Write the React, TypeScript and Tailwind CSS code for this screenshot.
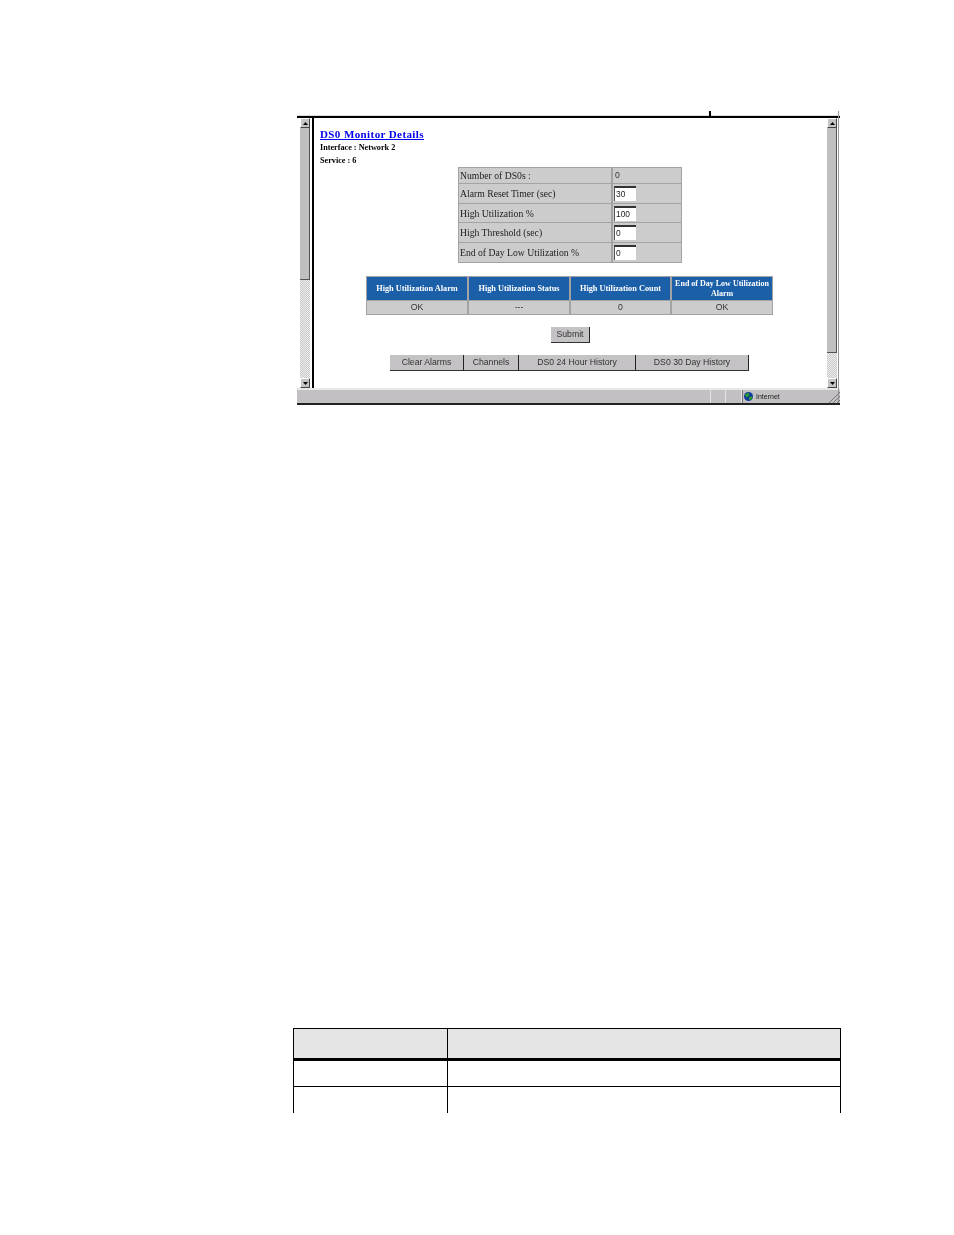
const serif = "font-['Liberation_Serif',serif]";
const sans = "font-['Liberation_Sans',sans-serif]";

function Arrow({ down }: { down?: boolean }) {
  return (
    <div className="flex h-[10px] w-full items-center justify-center border border-t-white border-l-white border-r-[#444] border-b-[#444] bg-[#c4c4c4]">
      <svg width="5" height="3" viewBox="0 0 5 3">
        <path d={down ? "M0 0H5L2.5 3Z" : "M0 3H5L2.5 0Z"} fill="#000" />
      </svg>
    </div>
  );
}

function Scrollbar({ thumb }: { thumb: number }) {
  return (
    <div className="flex h-full w-[10px] flex-col">
      <Arrow />
      <div
        className="w-full shrink-0 border-r border-b border-r-[#555] border-b-[#555] bg-[#c0c0c0]"
        style={{ height: thumb }}
      />
      <div className="flex-1 bg-[repeating-conic-gradient(#c8c8c8_0%_25%,#eeeeee_0%_50%)] bg-[length:2px_2px]" />
      <Arrow down />
    </div>
  );
}

function FormRow({ label, value, input, h }: { label: string; value: string; input?: boolean; h: string }) {
  return (
    <div className={`flex ${h} border-b border-[#a3a3a3] last:border-b-0`}>
      <div className={`flex w-[154px] items-center border-r-2 border-[#a3a3a3] pt-[2px] pl-[1px] ${serif} text-[9.7px] text-[#222]`}>
        {label}
      </div>
      <div className="flex flex-1 items-center pl-[1px]">
        {input ? (
          <div className={`flex h-[15px] w-[22px] items-center border-t-2 border-l border-t-[#333] border-l-[#555] bg-white pl-[1px] ${sans} text-[8.4px] text-[#222]`}>
            {value}
          </div>
        ) : (
          <span className={`${sans} pl-[1px] text-[8.7px] text-[#333]`}>{value}</span>
        )}
      </div>
    </div>
  );
}

function Btn({ children, w }: { children: string; w: string }) {
  return (
    <div className={`flex h-[16px] ${w} items-center justify-center border-r border-b border-r-[#222] border-b-[#333] bg-[#c4c2c4] ${sans} text-[8.7px] text-[#333]`}>
      {children}
    </div>
  );
}

const heads = ["High Utilization Alarm", "High Utilization Status", "High Utilization Count", "End of Day Low Utilization Alarm"];
const vals = ["OK", "---", "0", "OK"];

export default function App() {
  return (
    <div className="h-[1235px] w-[954px] overflow-hidden bg-white pt-[111px]">
      {/* browser window */}
      <div className="relative ml-[297px] flex h-[294px] w-[543px] flex-col blur-[0.3px]">
        <div className="absolute top-0 left-[412px] h-[5px] w-[1.5px] bg-black" />
        <div className="absolute top-0 right-[1px] h-[292px] w-[1px] bg-[#999]" />
        <div className="mt-[4px] h-[1px] w-full shrink-0 bg-[#dddddd]" />
        <div className="h-[2px] w-full shrink-0 bg-black" />
        <div className="flex h-[270px] shrink-0">
          <div className="ml-[3px] h-full">
            <Scrollbar thumb={152} />
          </div>
          <div className="ml-[2px] h-full w-[2px] bg-black" />
          {/* page */}
          <div className="flex w-[513px] flex-col pl-[6px]">
            <div className={`mt-[9px] h-[14px] text-[11px] leading-[14px] font-bold tracking-[0.4px] text-[#0000ee] underline ${serif}`}>
              DS0 Monitor Details
            </div>
            <div className={`text-[8.2px] leading-[13px] font-bold text-black ${serif}`}>Interface : Network 2</div>
            <div className={`text-[8.2px] leading-[13px] font-bold text-black ${serif}`}>Service : 6</div>
            {/* settings table */}
            <div className="ml-[138px] w-[224px] border border-[#a3a3a3] bg-[#cccccc]">
              <FormRow h="h-[16px]" label="Number of DS0s :" value="0" />
              <FormRow h="h-[20px]" label="Alarm Reset Timer (sec)" value="30" input />
              <FormRow h="h-[19px]" label="High Utilization %" value="100" input />
              <FormRow h="h-[20px]" label="High Threshold (sec)" value="0" input />
              <FormRow h="h-[19px]" label="End of Day Low Utilization %" value="0" input />
            </div>
            {/* status table */}
            <div className="mt-[13px] ml-[46px] w-[407px] border border-[#a3a3a3]">
              <div className="grid h-[23px] grid-cols-[102px_102px_101px_1fr] bg-[#1a5fa8]">
                {heads.map((h, i) => (
                  <div
                    key={h}
                    className={`flex items-center justify-center border-r-2 border-[#a3a3a3] text-center ${i === 3 ? "text-[8px]" : "text-[8.3px]"} leading-[10px] font-bold text-white last:border-r-0 ${serif}`}
                  >
                    {h}
                  </div>
                ))}
              </div>
              <div className="grid h-[14px] grid-cols-[102px_102px_101px_1fr] border-t border-[#a3a3a3] bg-[#cccccc]">
                {vals.map((v, i) => (
                  <div
                    key={i}
                    className={`flex items-center justify-center border-r-2 border-[#a3a3a3] text-[8.7px] text-[#333] last:border-r-0 ${sans}`}
                  >
                    {v}
                  </div>
                ))}
              </div>
            </div>
            {/* submit */}
            <div className="mt-[12px] ml-[231px] flex">
              <Btn w="w-[39px]">Submit</Btn>
            </div>
            {/* action buttons */}
            <div className="mt-[12px] ml-[70px] flex">
              <Btn w="w-[74px]">Clear Alarms</Btn>
              <Btn w="w-[55px]">Channels</Btn>
              <Btn w="w-[117px]">DS0 24 Hour History</Btn>
              <Btn w="w-[113px]">DS0 30 Day History</Btn>
            </div>
          </div>
          <div className="h-full">
            <Scrollbar thumb={225} />
          </div>
        </div>
        {/* status bar */}
        <div className="flex h-[17px] shrink-0 items-stretch border-t-2 border-b-2 border-t-[#e8e8e8] border-b-[#222] bg-[#c2c0c2]">
          <div className="flex-1" />
          <div className="w-[16px] border-x border-[#e4e4e4]" />
          <div className="w-[16px] border-r border-[#e4e4e4]" />
          <div className={`relative flex w-[98px] items-center gap-[3px] border-l border-[#777] pl-[1px] ${sans} text-[7px] text-[#222]`}>
            <svg width="9" height="9" viewBox="0 0 10 10">
              <circle cx="5" cy="5" r="5" fill="#123a9c" />
              <path d="M1 3 L5 0.5 L6 3.5 L3 6 Z M5.5 6 L9.5 4.5 L8 9 L5.5 8.5 Z" fill="#2aa02a" />
            </svg>
            <span className="pt-[2px]">Internet</span>
            <svg className="absolute right-0 bottom-0" width="12" height="12" viewBox="0 0 12 12">
              <path d="M1 12L12 1M5 12L12 5M9 12L12 9" stroke="#777" strokeWidth="1" />
            </svg>
          </div>
        </div>
      </div>
      {/* document table */}
      <div className="mt-[623px] ml-[293px] flex h-[85px] w-[548px] flex-col border-x border-t border-black">
        <div className="grid h-[29px] shrink-0 grid-cols-[154px_1fr] bg-[#e5e5e5]">
          <div className="border-r border-black" />
          <div />
        </div>
        <div className="h-[3px] shrink-0 bg-black" />
        <div className="grid h-[26px] shrink-0 grid-cols-[154px_1fr] border-b border-black">
          <div className="border-r border-black" />
          <div />
        </div>
        <div className="grid flex-1 grid-cols-[154px_1fr]">
          <div className="border-r border-black" />
          <div />
        </div>
      </div>
    </div>
  );
}
